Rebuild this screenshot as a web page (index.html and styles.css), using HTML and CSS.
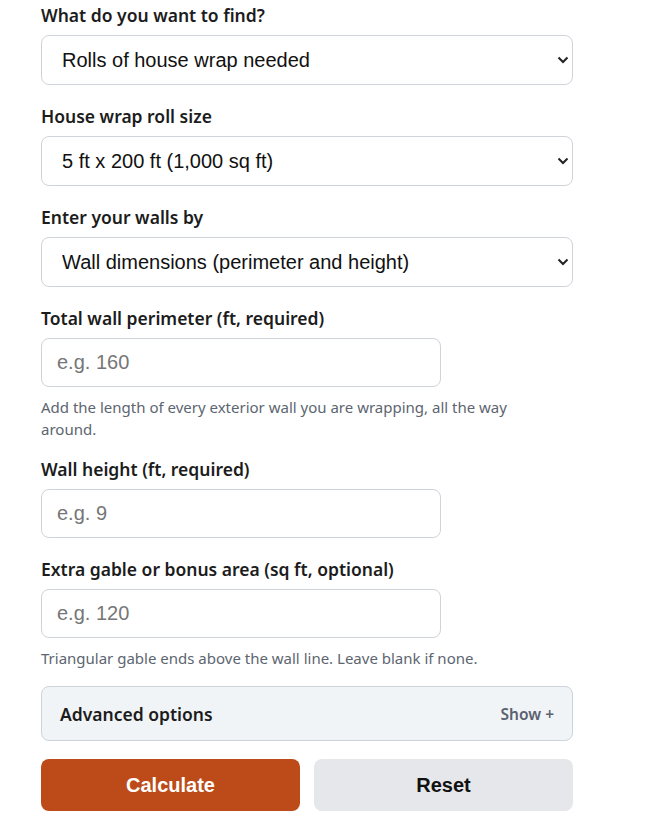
FILE: index.html
```html
<!DOCTYPE html>
<html>
<head>
<meta charset="utf-8">
<link rel="stylesheet" href="styles.css">
</head>
<body>
<form class="calc">
  <div class="field">
    <label class="label">What do you want to find?</label>
    <div class="select-wrap">
      <select class="control select"><option>Rolls of house wrap needed</option></select>
      <svg class="chev" width="12" height="8" viewBox="0 0 12 8"><path d="M1.5 1.5 L6 6 L10.5 1.5" fill="none" stroke="#222" stroke-width="2"/></svg>
    </div>
  </div>
  <div class="field">
    <label class="label">House wrap roll size</label>
    <div class="select-wrap">
      <select class="control select"><option>5 ft x 200 ft (1,000 sq ft)</option></select>
      <svg class="chev" width="12" height="8" viewBox="0 0 12 8"><path d="M1.5 1.5 L6 6 L10.5 1.5" fill="none" stroke="#222" stroke-width="2"/></svg>
    </div>
  </div>
  <div class="field">
    <label class="label">Enter your walls by</label>
    <div class="select-wrap">
      <select class="control select"><option>Wall dimensions (perimeter and height)</option></select>
      <svg class="chev" width="12" height="8" viewBox="0 0 12 8"><path d="M1.5 1.5 L6 6 L10.5 1.5" fill="none" stroke="#222" stroke-width="2"/></svg>
    </div>
  </div>
  <div class="field has-help">
    <label class="label">Total wall perimeter (ft, required)</label>
    <input class="control input" placeholder="e.g. 160">
    <p class="help">Add the length of every exterior wall you are wrapping, all the way around.</p>
  </div>
  <div class="field">
    <label class="label">Wall height (ft, required)</label>
    <input class="control input" placeholder="e.g. 9">
  </div>
  <div class="field has-help">
    <label class="label">Extra gable or bonus area (sq ft, optional)</label>
    <input class="control input" placeholder="e.g. 120">
    <p class="help">Triangular gable ends above the wall line. Leave blank if none.</p>
  </div>
  <div class="advanced">
    <span class="adv-title">Advanced options</span>
    <span class="adv-toggle">Show +</span>
  </div>
  <div class="actions">
    <button type="button" class="btn primary">Calculate</button>
    <button type="button" class="btn secondary">Reset</button>
  </div>
</form>
</body>
</html>
```

FILE: styles.css
```css
html, body {
  margin: 0;
  padding: 0;
  background: #fff;
}
body {
  font-family: "Noto Sans", "Open Sans", sans-serif;
  color: #1a1a1a;
}
.calc {
  width: 532px;
  margin-left: 41px;
  padding-top: 4px;
}
.field {
  margin-bottom: 20px;
}
.field.has-help {
  margin-bottom: 18px;
}
.label {
  display: block;
  font-size: 17.5px;
  font-weight: 600;
  line-height: 23px;
  color: #1c1c1c;
  margin-bottom: 8px;
}
.select-wrap {
  position: relative;
}
.control {
  box-sizing: border-box;
  display: block;
  height: 50px;
  border: 1px solid #cfd3da;
  border-radius: 8px;
  background: #fff;
  font-family: "Liberation Sans", Arial, sans-serif;
  font-size: 20px;
  color: #111;
  outline: none;
  margin: 0;
}
.select {
  width: 532px;
  -webkit-appearance: none;
  appearance: none;
  padding: 0 40px 0 20px;
}
.chev {
  position: absolute;
  right: 4px;
  top: 21px;
  pointer-events: none;
}
.input {
  width: 400px;
  height: 49px;
  padding: 0 15px;
}
.input::placeholder {
  color: #767676;
}
.help {
  margin: 9px 0 0;
  max-width: 500px;
  font-size: 15px;
  line-height: 22px;
  color: #5c6570;
}
.advanced {
  box-sizing: border-box;
  height: 55px;
  margin-top: -1px;
  border: 1px solid #cdd3da;
  border-radius: 8px;
  background: #f1f4f7;
  display: flex;
  align-items: center;
  justify-content: space-between;
  padding: 0 18px 0 18px;
}
.adv-title {
  font-size: 17.5px;
  font-weight: 600;
  color: #1c1c1c;
}
.adv-toggle {
  font-size: 15.5px;
  font-weight: 600;
  color: #5a6270;
}
.actions {
  display: flex;
  gap: 14px;
  margin-top: 18px;
}
.btn {
  flex: 1;
  height: 52px;
  border: none;
  border-radius: 8px;
  font-family: "Liberation Sans", Arial, sans-serif;
  font-size: 20px;
  font-weight: 700;
  cursor: pointer;
}
.primary {
  background: #bc4b19;
  color: #fff;
}
.secondary {
  background: #e5e7eb;
  color: #111;
}
```
